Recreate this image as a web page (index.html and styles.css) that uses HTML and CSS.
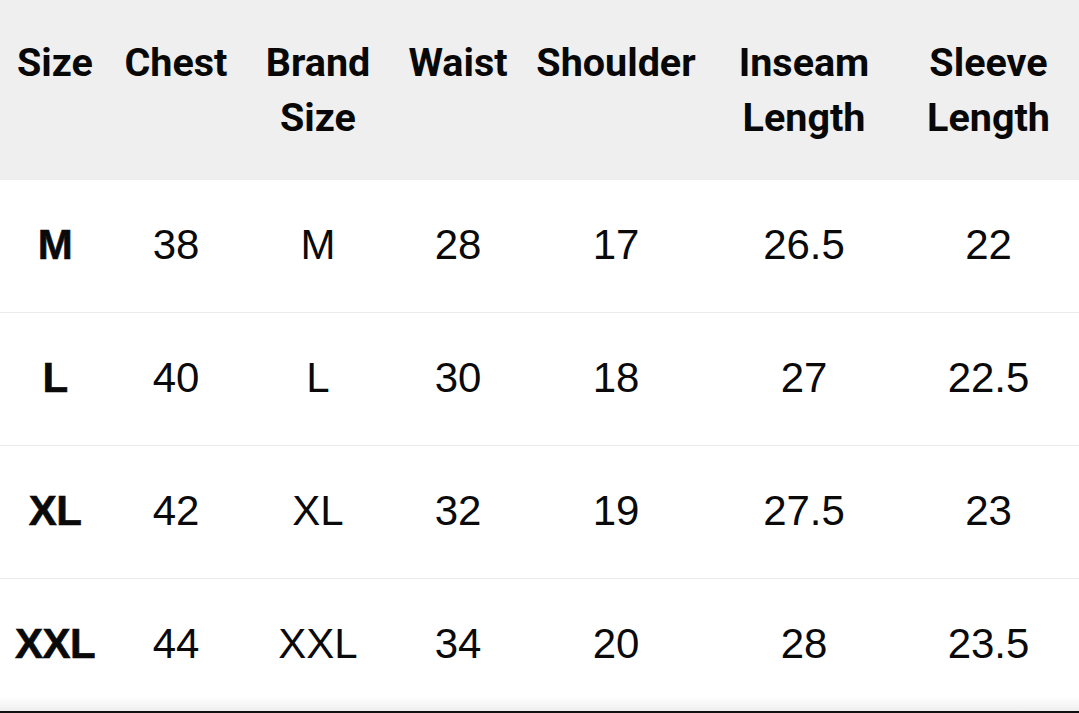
FILE: index.html
```html
<!DOCTYPE html>
<html>
<head>
<meta charset="utf-8">
<link rel="stylesheet" href="styles.css">
</head>
<body>
<div class="chart">
  <div class="row head">
    <div class="cell">Size</div>
    <div class="cell">Chest</div>
    <div class="cell">Brand<br>Size</div>
    <div class="cell">Waist</div>
    <div class="cell">Shoulder</div>
    <div class="cell">Inseam<br>Length</div>
    <div class="cell">Sleeve<br>Length</div>
  </div>
  <div class="row body">
    <div class="cell key">M</div><div class="cell">38</div><div class="cell">M</div><div class="cell">28</div><div class="cell">17</div><div class="cell">26.5</div><div class="cell">22</div>
  </div>
  <div class="row body">
    <div class="cell key">L</div><div class="cell">40</div><div class="cell">L</div><div class="cell">30</div><div class="cell">18</div><div class="cell">27</div><div class="cell">22.5</div>
  </div>
  <div class="row body">
    <div class="cell key">XL</div><div class="cell">42</div><div class="cell">XL</div><div class="cell">32</div><div class="cell">19</div><div class="cell">27.5</div><div class="cell">23</div>
  </div>
  <div class="row body last">
    <div class="cell key">XXL</div><div class="cell">44</div><div class="cell">XXL</div><div class="cell">34</div><div class="cell">20</div><div class="cell">28</div><div class="cell">23.5</div>
  </div>
</div>
</body>
</html>
```
FILE: styles.css
```css
html, body {
  margin: 0;
  padding: 0;
  background: #ffffff;
}
.chart {
  width: 1079px;
  height: 713px;
  overflow: hidden;
  color: #0a0a0a;
}
.row {
  display: grid;
  grid-template-columns: 110px 132px 152px 128px 188px 188px 181px;
  box-sizing: border-box;
}
.head {
  height: 180px;
  background: #efefef;
  padding-top: 35px;
  font-family: Roboto, "Liberation Sans", sans-serif;
  font-weight: 700;
  font-size: 39.5px;
  line-height: 55px;
  color: #080808;
}
.head .cell {
  text-align: center;
  white-space: nowrap;
}
.body {
  height: 132px;
  align-items: center;
  padding-bottom: 3px;
  font-family: "Liberation Sans", Arial, sans-serif;
  font-size: 42px;
  line-height: 50px;
}
.body + .body {
  height: 133px;
  border-top: 1px solid #ececec;
}
.body .cell {
  text-align: center;
  white-space: nowrap;
}
.body .key {
  font-weight: 700;
  letter-spacing: -0.5px;
  -webkit-text-stroke: 0.6px #0a0a0a;
}
.body.last {
  height: 135px;
  border-bottom: 2px solid #111111;
  background: linear-gradient(to bottom, #ffffff 0, #ffffff 118px, #ededed 133px);
}
```
